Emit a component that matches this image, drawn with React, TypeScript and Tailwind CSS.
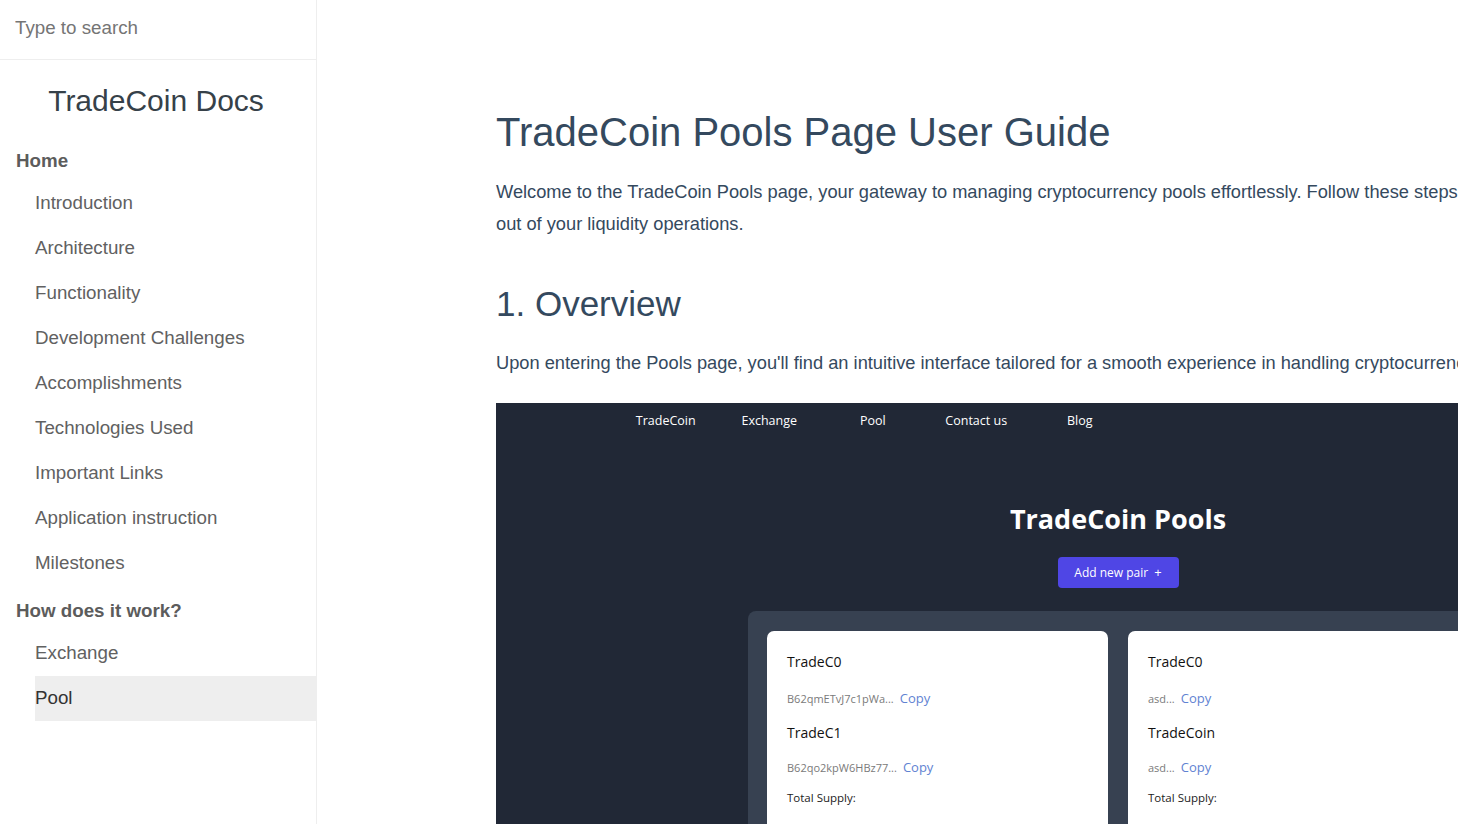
import React from "react";

const homeLinks = [
  "Introduction",
  "Architecture",
  "Functionality",
  "Development Challenges",
  "Accomplishments",
  "Technologies Used",
  "Important Links",
  "Application instruction",
  "Milestones",
];

const workLinks = [
  { label: "Exchange", active: false },
  { label: "Pool", active: true },
];

const navItems = ["TradeCoin", "Exchange", "Pool", "Contact us", "Blog"];

function Sidebar() {
  return (
    <aside className="flex h-screen w-[317px] shrink-0 flex-col border-r border-[#eee] bg-white">
      <div className="flex h-[60px] items-center border-b border-[#eee] px-[15px] pb-[2px]">
        <input
          className="w-full bg-transparent text-[18.75px] text-[#333] outline-none placeholder:text-[#757575]"
          placeholder="Type to search"
        />
      </div>
      <div className="flex h-[81px] items-center justify-center pr-[4px] text-[30px] text-[#364149]">
        TradeCoin Docs
      </div>
      <div className="flex h-[40px] items-center pl-[16px] text-[18.75px] font-bold text-[#5c5c5c]">
        Home
      </div>
      <ul>
        {homeLinks.map((l) => (
          <li key={l} className="ml-[35px] flex h-[45px] items-center text-[18.75px] text-[#616161]">
            {l}
          </li>
        ))}
      </ul>
      <div className="mt-[6px] flex h-[39px] items-center pl-[16px] text-[18.75px] font-bold text-[#5c5c5c]">
        How does it work?
      </div>
      <ul>
        {workLinks.map((l) => (
          <li
            key={l.label}
            className={
              l.active
                ? "ml-[35px] flex h-[45px] items-center bg-[#eee] text-[18.75px] text-[#333]"
                : "ml-[35px] flex h-[45px] items-center text-[18.75px] text-[#616161]"
            }
          >
            {l.label}
          </li>
        ))}
      </ul>
    </aside>
  );
}

function AddressRow({ addr }: { addr: string }) {
  return (
    <div className="flex items-baseline gap-[6px]">
      <span className="text-[11px] text-[#7a7a7a]">{addr}</span>
      <span className="text-[13px] text-[#5f83d2]">Copy</span>
    </div>
  );
}

function PoolCard({ a, aAddr, b, bAddr }: { a: string; aAddr: string; b: string; bAddr: string }) {
  return (
    <div className="h-[260px] w-[341px] shrink-0 rounded-[7px] bg-white px-[20px] pt-[20px] text-[#111]">
      <div className="text-[14px] leading-[22px]">{a}</div>
      <div className="mt-[15px] leading-[20px]">
        <AddressRow addr={aAddr} />
      </div>
      <div className="mt-[13px] text-[14px] leading-[22px]">{b}</div>
      <div className="mt-[13px] leading-[20px]">
        <AddressRow addr={bAddr} />
      </div>
      <div className="mt-[10px] text-[11.5px] leading-[20px] text-[#222]">Total Supply:</div>
    </div>
  );
}

function PoolsScreenshot() {
  return (
    <div
      className="h-[520px] w-[1244px] bg-[#212836]"
      style={{ fontFamily: '"Open Sans", "Noto Sans", sans-serif' }}
    >
      <nav className="ml-[118px] flex pt-[8px] text-[12.5px] text-white">
        {navItems.map((n) => (
          <div key={n} className="w-[103.5px] text-center leading-[20px]">
            {n}
          </div>
        ))}
      </nav>
      <div className="mt-[70px] text-center text-[27px] font-bold leading-[36px] text-white">
        TradeCoin Pools
      </div>
      <div className="mt-[20px] flex justify-center">
        <button className="flex h-[31px] w-[121px] items-center justify-center gap-[6px] rounded-[4px] bg-[#4f46e5] text-[12px] text-white">
          Add new pair <span className="text-[13px]">+</span>
        </button>
      </div>
      <div className="mt-[23px] ml-[252px] flex w-[740px] gap-[20px] rounded-t-[8px] bg-[#374151] px-[19px] pt-[20px]">
        <PoolCard a="TradeC0" aAddr="B62qmETvJ7c1pWa..." b="TradeC1" bAddr="B62qo2kpW6HBz77..." />
        <PoolCard a="TradeC0" aAddr="asd..." b="TradeCoin" bAddr="asd..." />
      </div>
    </div>
  );
}

export default function App() {
  return (
    <div
      className="flex h-screen w-full overflow-hidden bg-white"
      style={{ fontFamily: '"Liberation Sans", Arial, sans-serif' }}
    >
      <Sidebar />
      <main className="relative min-w-0 flex-1 overflow-hidden">
        <div className="ml-[179px] w-[1110px] pt-[108px] text-[#34495e]">
          <h1 className="mb-[20px] text-[40px] leading-[48px]">TradeCoin Pools Page User Guide</h1>
          <p className="text-[18.25px] leading-[32px]">
            Welcome to the TradeCoin Pools page, your gateway to managing cryptocurrency pools effortlessly. Follow these steps to get the most out of your liquidity operations.
          </p>
          <h2 className="mt-[43px] mb-[22px] text-[35px] leading-[42px]">1. Overview</h2>
          <p className="text-[18.25px] leading-[32px]">
            Upon entering the Pools page, you'll find an intuitive interface tailored for a smooth experience in handling cryptocurrency pools.
          </p>
          <div className="mt-[24px]">
            <PoolsScreenshot />
          </div>
        </div>
      </main>
    </div>
  );
}
